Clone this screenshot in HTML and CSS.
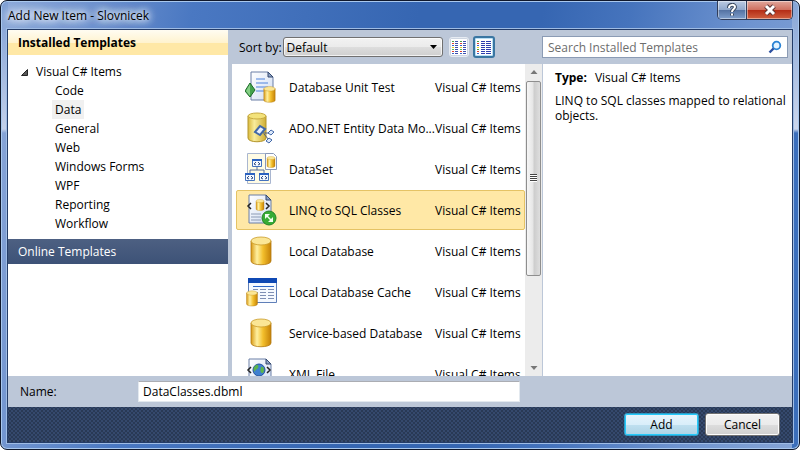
FILE: index.html
```
<!doctype html>
<html lang="en">
<head>
<meta charset="utf-8">
<title>Add New Item - Slovnicek</title>
<link rel="stylesheet" href="styles.css">
</head>
<body>
<svg class="defs" width="0" height="0" aria-hidden="true">
  <defs>
    <linearGradient id="gold" x1="0" x2="1" y1="0" y2="0">
      <stop offset="0" stop-color="#d99a14"/>
      <stop offset=".3" stop-color="#fff0a0"/>
      <stop offset=".6" stop-color="#f3bf2c"/>
      <stop offset="1" stop-color="#c58208"/>
    </linearGradient>
    <linearGradient id="palegold" x1="0" x2="1" y1="0" y2="0">
      <stop offset="0" stop-color="#d9b93c"/>
      <stop offset=".35" stop-color="#f8ec9c"/>
      <stop offset="1" stop-color="#cfae34"/>
    </linearGradient>
    <linearGradient id="paper" x1="0" x2="1" y1="0" y2="1">
      <stop offset="0" stop-color="#ffffff"/>
      <stop offset="1" stop-color="#cfdcf2"/>
    </linearGradient>
    <symbol id="db" viewBox="0 0 22 30">
      <path d="M1 5v20c0 5 20 5 20 0V5z" fill="url(#gold)" stroke="#b27a10" stroke-width=".8"/>
      <ellipse cx="11" cy="5" rx="10" ry="4" fill="#fbe695" stroke="#c99a28" stroke-width=".8"/>
    </symbol>
    <symbol id="page" viewBox="0 0 24 30">
      <path d="M1 1h17l5 5v23H1z" fill="url(#paper)" stroke="#6b7fa6"/>
      <path d="M18 1v5h5z" fill="#8fa3c4" stroke="#34496f"/>
    </symbol>
  </defs>
</svg>
<div class="window">
  <header class="titlebar">
    <h1>Add New Item - Slovnicek</h1>
    <div class="caption">
      <button class="help" aria-label="Help">
        <svg width="12" height="14" viewBox="0 0 12 14"><path d="M3 5c0-4 6-4 6-1 0 2-3 2-3 5M6 10.500v2" fill="none" stroke="#39485f" stroke-width="4"/><path d="M3 5c0-4 6-4 6-1 0 2-3 2-3 5M6 10.500v2" fill="none" stroke="#fff" stroke-width="2"/></svg>
      </button>
      <button class="close" aria-label="Close">
        <svg width="14" height="12" viewBox="0 0 14 12"><path d="M3 2l8 8M11 2l-8 8" stroke="#5b3535" stroke-width="5"/><path d="M3 2l8 8M11 2l-8 8" stroke="#fff" stroke-width="3"/></svg>
      </button>
    </div>
  </header>
  <main class="client">
    <div class="panes">
      <nav class="templates">
        <h2 class="installed">Installed Templates</h2>
        <ul class="tree">
          <li><svg class="twisty" width="7" height="7" viewBox="0 0 7 7"><path d="M6.500.5v6h-6z" fill="#595959" stroke="#262626"/></svg>Visual C# Items
            <ul>
              <li>Code</li>
              <li><span class="current">Data</span></li>
              <li>General</li>
              <li>Web</li>
              <li>Windows Forms</li>
              <li>WPF</li>
              <li>Reporting</li>
              <li>Workflow</li>
            </ul>
          </li>
        </ul>
        <h2 class="online">Online Templates</h2>
      </nav>
      <div class="content">
        <div class="toolbar">
          <label for="sort">Sort by:</label>
          <select id="sort"><option>Default</option></select>
          <button class="view" aria-label="Small icons">
            <svg width="16" height="16" viewBox="0 0 16 16"><path fill="#fff" d="M0 0h16v16H0z"/><path d="M1 2.500h2M9 2.500h2" stroke="#4a9a4a"/><path d="M1 4.500h2M9 4.500h2M1 12.500h2M9 12.500h2" stroke="#e04030"/><path d="M1 6.500h2M9 6.500h2M1 14.500h2M9 14.500h2" stroke="#3a62c8"/><path d="M1 8.500h2M9 8.500h2" stroke="#e8d020"/><path d="M1 10.500h2M9 10.500h2" stroke="#58b058"/><path d="M4 2.500h3M4 4.500h3M4 6.500h3M4 8.500h3M4 10.500h3M4 12.500h3M4 14.500h3M12 2.500h3M12 4.500h3M12 6.500h3M12 8.500h3M12 10.500h3M12 12.500h3M12 14.500h3" stroke="#3f4fae"/></svg>
          </button>
          <button class="view active" aria-label="Medium icons">
            <svg width="16" height="16" viewBox="0 0 16 16"><path fill="#fff" d="M0 0h16v16H0z"/><path d="M1 2.500h2M1 10.500h2" stroke="#4a9a4a"/><path d="M1 4.500h2M1 12.500h2" stroke="#e04030"/><path d="M1 6.500h2M1 14.500h2" stroke="#3a62c8"/><path d="M1 8.500h2" stroke="#e8d020"/><path d="M5 2.500h4M5 4.500h4M5 6.500h4M5 8.500h4M5 10.500h4M5 12.500h4M5 14.500h4M10 2.500h5M10 4.500h5M10 6.500h5M10 8.500h5M10 10.500h5M10 12.500h5M10 14.500h5" stroke="#2f3fae"/></svg>
          </button>
          <div class="search">
            <input type="search" placeholder="Search Installed Templates" aria-label="Search Installed Templates">
            <svg width="14" height="14" viewBox="0 0 14 14"><circle cx="8.500" cy="5.500" r="3.800" fill="#e4f3ff" stroke="#2a83d4" stroke-width="1.800"/><path d="M5.500 8.500l-4 4" stroke="#2b4fa0" stroke-width="2.400"/></svg>
          </div>
        </div>
        <div class="results">
          <ul class="items">
            <li>
              <svg class="icon" viewBox="0 0 32 32"><use href="#page" x="5" y="0" width="24" height="30"/><path d="M11 8h9M11 12h12M11 16h12M11 20h8" stroke="#4f83dc"/><path d="M5 12l5 7-5 7-5-6z" fill="#43a34c" stroke="#1e6b2a"/><path d="M5 13v12l-4-5z" fill="#86cf86"/><use href="#db" x="18" y="15" width="13" height="17"/></svg>
              <span class="name">Database Unit Test</span><span class="type">Visual C# Items</span>
            </li>
            <li>
              <svg class="icon" viewBox="0 0 32 32"><path d="M3 4v22c0 5 18 5 18 0V4z" fill="url(#palegold)" stroke="#b3952c"/><ellipse cx="12" cy="4" rx="9" ry="3" fill="#f3e27a" stroke="#c8aa40"/><path d="M18 21h10M19 22l5 6h3" fill="none" stroke="#4b5f86"/><path d="M10 20l5-6 5 3-5 6z" fill="#e8f0fc" stroke="#4268a8" stroke-width="2"/><path d="M23 21l3-3 3 2-3 3zM21 29l3-3 3 2-3 3z" fill="#dce8fa" stroke="#4268a8"/></svg>
              <span class="name">ADO.NET Entity Data Mo...</span><span class="type">Visual C# Items</span>
            </li>
            <li>
              <svg class="icon" viewBox="0 0 32 32"><path d="M2.500.5h23v30h-23z" fill="#fffbe4" stroke="#a9b6d0"/><path d="M12 12v5M5 21v-4h14v4" fill="none" stroke="#5a6f98"/><g fill="#f4f8ff" stroke="#4472bd"><path d="M7.500 6.500h9v7h-9zM.5 20.500h9v7h-9zM14.500 20.500h9v7h-9z"/></g><path d="M7 7h10M0 21h10M14 21h10" stroke="#2c62c0" stroke-width="2"/><path d="M11 9l-2 2 2 1M13 9l2 2-2 1M4 23l-2 2 2 1M6 23l2 2-2 1M18 23l-2 2 2 1M20 23l2 2-2 1" fill="none" stroke="#334f84"/><path d="M20.500.5h8l3 3v13h-11z" fill="#fff" stroke="#8a9ab9"/><use href="#db" x="21" y="3" width="10" height="12"/></svg>
              <span class="name">DataSet</span><span class="type">Visual C# Items</span>
            </li>
            <li class="selected">
              <svg class="icon" viewBox="0 0 32 32"><use href="#page" x="3" y="0" width="24" height="30"/><use href="#db" x="10" y="5" width="10" height="12"/><path d="M6 9l-3 3 3 3M21 9l3 3-3 3" fill="none" stroke="#222" stroke-width="1.500"/><path d="M6 20h10M6 23h10M6 26h10" stroke="#8c9bb5"/><circle cx="24" cy="24" r="7" fill="#37ac35" stroke="#248326"/><path d="M20 20h5l-2 2 3 3 2-2v5h-5l2-2-3-3-2 2z" fill="#f3fff0"/></svg>
              <span class="name">LINQ to SQL Classes</span><span class="type">Visual C# Items</span>
            </li>
            <li>
              <svg class="icon" viewBox="0 0 32 32"><use href="#db" x="5" y="1" width="22" height="30"/></svg>
              <span class="name">Local Database</span><span class="type">Visual C# Items</span>
            </li>
            <li>
              <svg class="icon" viewBox="0 0 32 32"><path d="M3.500 2.500h28v24h-28z" fill="#f5f9ff" stroke="#5f7fb8"/><path d="M3 2h29v5H3z" fill="#0f49b4"/><path d="M8 10.500h21" stroke="#2f68c8"/><path d="M8 13.500h5M15 13.500h6M23 13.500h6M8 16.500h5M15 16.500h6M23 16.500h6M15 19.500h6M23 19.500h6M15 22.500h6M23 22.500h6" stroke="#7e8fb4"/><use href="#db" x="1" y="14" width="12" height="17"/></svg>
              <span class="name">Local Database Cache</span><span class="type">Visual C# Items</span>
            </li>
            <li>
              <svg class="icon" viewBox="0 0 32 32"><use href="#db" x="5" y="1" width="22" height="30"/></svg>
              <span class="name">Service-based Database</span><span class="type">Visual C# Items</span>
            </li>
            <li>
              <svg class="icon" viewBox="0 0 32 32"><use href="#page" x="3" y="0" width="24" height="30"/><circle cx="14" cy="12" r="6" fill="#3f80d0" stroke="#22509a"/><path d="M10 8c3-3 4 0 3 2s-3 1-3 4c-2-2-2-4 0-6zM16 9c3-1 4 3 2 6-3 0-3-3-2-6z" fill="#5cb54c"/><path d="M6 9l-3 3 3 3M22 9l3 3-3 3" fill="none" stroke="#222" stroke-width="1.500"/></svg>
              <span class="name">XML File</span><span class="type">Visual C# Items</span>
            </li>
          </ul>
          <div class="scrollbar">
            <svg width="8" height="5" viewBox="0 0 8 5"><path d="M4 0l3.500 4h-7z" fill="#777"/></svg>
            <div class="track"><div class="thumb"><i></i></div></div>
            <svg width="8" height="5" viewBox="0 0 8 5"><path d="M4 5L.5 1h7z" fill="#777"/></svg>
          </div>
          <section class="details">
            <p><b>Type:</b>Visual C# Items</p>
            <p>LINQ to SQL classes mapped to relational objects.</p>
          </section>
        </div>
      </div>
    </div>
    <div class="namebar">
      <label for="name">Name:</label>
      <input id="name" type="text" value="DataClasses.dbml">
    </div>
    <footer>
      <button class="btn default">Add</button>
      <button class="btn">Cancel</button>
    </footer>
  </main>
</div>
</body>
</html>
```
FILE: styles.css
```
* { box-sizing: border-box; }
body {
  margin: 0;
  height: 100vh;
  background: #fff;
  font-family: "Open Sans", "Noto Sans", sans-serif;
  font-size: 12px;
  line-height: 15px;
  color: #000;
}
h1, h2, p, ul { margin: 0; padding: 0; font: inherit; list-style: none; }
button, input, select { font: inherit; color: inherit; margin: 0; }
.defs { position: absolute; }

.window {
  display: flex;
  flex-direction: column;
  height: 100%;
  padding: 0 6px 6px;
  border: 1px solid #10182c;
  border-radius: 7px;
  box-shadow: inset 0 0 0 1px #a9c8ee;
  background:
    linear-gradient(#7e9ed4 0, #c3d0ea 128px, transparent 132px) left / 7px 100% no-repeat,
    linear-gradient(#86a5d6 0, #ccd6ec 128px, #3b6ebb 132px) right / 7px 100% no-repeat,
    linear-gradient(100deg, #8faada 0, #4a78c2 22%, #3666b2 48%, #3666b2 62%, #4674bd 72%, #6f94d0 86%, #86a5d6 100%);
}
.titlebar {
  display: flex;
  justify-content: space-between;
  height: 28px;
}
.titlebar h1 {
  padding: 7px 10px 0 1px;
  text-shadow: 0 0 6px #fff, 0 0 8px #dfe9f8, 0 0 10px #dfe9f8, 0 0 12px #dfe9f8;
}
.caption {
  display: flex;
  height: 19px;
  border: 1px solid #303d5a;
  border-top: 0;
  border-radius: 0 0 5px 5px;
  overflow: hidden;
}
.caption button {
  display: flex;
  align-items: center;
  justify-content: center;
  width: 28px;
  padding: 0;
  border: 0;
  box-shadow: inset 0 0 0 1px #ffffff70;
  background: linear-gradient(#bccbe3, #90a8cc 48%, #5573a3 52%, #7f9fcc);
}
.caption .close {
  width: 46px;
  border-left: 1px solid #303d5a;
  background: linear-gradient(#e0a79c, #cf7161 48%, #b52e17 52%, #d0603f);
}

.client {
  display: flex;
  flex: 1;
  flex-direction: column;
  min-height: 0;
  border: 1px solid #243c68;
  box-shadow: 0 0 0 1px #9fbce4;
  background: #bcc7d8;
}
.panes { display: flex; flex: 1; min-height: 0; }
.templates { width: 220px; margin-right: 4px; background: #fff; }
.templates h2 { padding: 5px 10px; }
.templates .installed { font-weight: bold; background: linear-gradient(#fffcf2, #fff3cf 50%, #ffe8a6 54%); }
.online { color: #fff; background: linear-gradient(#4d6082, #3d5277); }
.tree { padding: 7px 0 6px 13px; line-height: 19px; }
.tree ul { padding-left: 34px; }
.twisty { margin-right: 8px; }
.current { display: inline-block; margin-left: -3px; padding: 0 3px; background: #f0f0f0; }

.content { display: flex; flex: 1; flex-direction: column; min-width: 0; }
.toolbar { display: flex; align-items: center; height: 34px; padding: 0 4px 0 7px; }
.toolbar select {
  width: 160px;
  height: 20px;
  margin: 0 6px 0 1px;
  padding: 0 3px;
  appearance: none;
  border: 1px solid #707070;
  border-radius: 3px;
  box-shadow: inset 0 0 0 1px #ffffffb0;
  background:
    url("data:image/svg+xml,%3Csvg xmlns='http://www.w3.org/2000/svg' width='7' height='4'%3E%3Cpath d='M0 0h7L3.5 4z'/%3E%3C/svg%3E") right 5px center no-repeat,
    linear-gradient(#f2f2f2, #ebebeb 50%, #dddddd 51%, #cfcfcf);
}
.view {
  display: flex;
  align-items: center;
  justify-content: center;
  width: 20px;
  height: 20px;
  margin-right: 4px;
  padding: 0;
  border: 1px solid #e6ebf2;
  border-radius: 3px;
  background: #cdd5e1;
}
.view.active { width: 22px; height: 22px; border: 2px solid #3a76a2; background: #b9dff5; }
.search {
  display: flex;
  align-items: center;
  width: 246px;
  height: 22px;
  margin-left: auto;
  padding: 0 5px;
  border: 1px solid #8b9bb4;
  background: #fff;
}
.search input { flex: 1; min-width: 0; padding: 0; border: 0; outline: 0; background: none; }
.search input::placeholder { color: #6d6d6d; opacity: 1; }

.results { display: flex; flex: 1; min-height: 0; background: #fff; }
.items { width: 293px; padding: 3px 0 0 4px; overflow: hidden; }
.items li {
  display: flex;
  align-items: center;
  height: 40px;
  margin-bottom: 1px;
  padding-left: 8px;
  border: 1px solid transparent;
  border-radius: 2px;
}
.items .selected { border-color: #e5c365; background: #ffe8a6; }
.icon { flex: none; width: 32px; height: 32px; margin-right: 12px; }
.name { width: 146px; white-space: nowrap; }
.type { flex: none; white-space: nowrap; }
.scrollbar {
  display: flex;
  flex-direction: column;
  align-items: center;
  width: 18px;
  padding: 6px 1px;
  border-right: 1px solid #bcc7d8;
  background: #ececec;
}
.track { flex: 1; width: 100%; padding: 6px 0; }
.thumb {
  display: flex;
  align-items: center;
  justify-content: center;
  height: 70%;
  border: 1px solid #8e8e8e;
  border-radius: 2px;
  background: linear-gradient(90deg, #f6f6f6, #e6e6e6 45%, #cdcdcd 55%, #dedede);
}
.thumb i { width: 7px; height: 8px; background: repeating-linear-gradient(#444 0 1px, #fff 1px 2px); }
.details { flex: 1; padding: 6px 4px 6px 12px; }
.details p { margin-bottom: 8px; }
.details b { margin-right: 8px; }

.namebar { display: flex; align-items: center; height: 31px; padding-left: 12px; }
.namebar label { width: 118px; }
.namebar input {
  width: 382px;
  height: 21px;
  padding: 0 4px;
  border: 1px solid #e3e9ef;
  border-top-color: #abadb3;
  background: #fff;
}
footer {
  display: flex;
  justify-content: flex-end;
  gap: 6px;
  height: 35px;
  padding: 6px 12px;
  background:
    radial-gradient(#35496d 1px, transparent 1px) 0 0 / 4px 4px,
    radial-gradient(#35496d 1px, transparent 1px) 2px 2px / 4px 4px,
    #293955;
}
.btn {
  width: 75px;
  height: 23px;
  padding: 0;
  border: 1px solid #707070;
  border-radius: 3px;
  box-shadow: inset 0 0 0 1px #fcfcfc;
  background: linear-gradient(#f2f2f2, #ebebeb 50%, #dddddd 51%, #cfcfcf);
}
.btn.default {
  border-color: #2c9cc6;
  box-shadow: inset 0 0 0 1px #25c9fa;
  background: linear-gradient(#e8f5fc, #d9eefa 50%, #bfe0f0 51%, #aed2e4);
}
```
